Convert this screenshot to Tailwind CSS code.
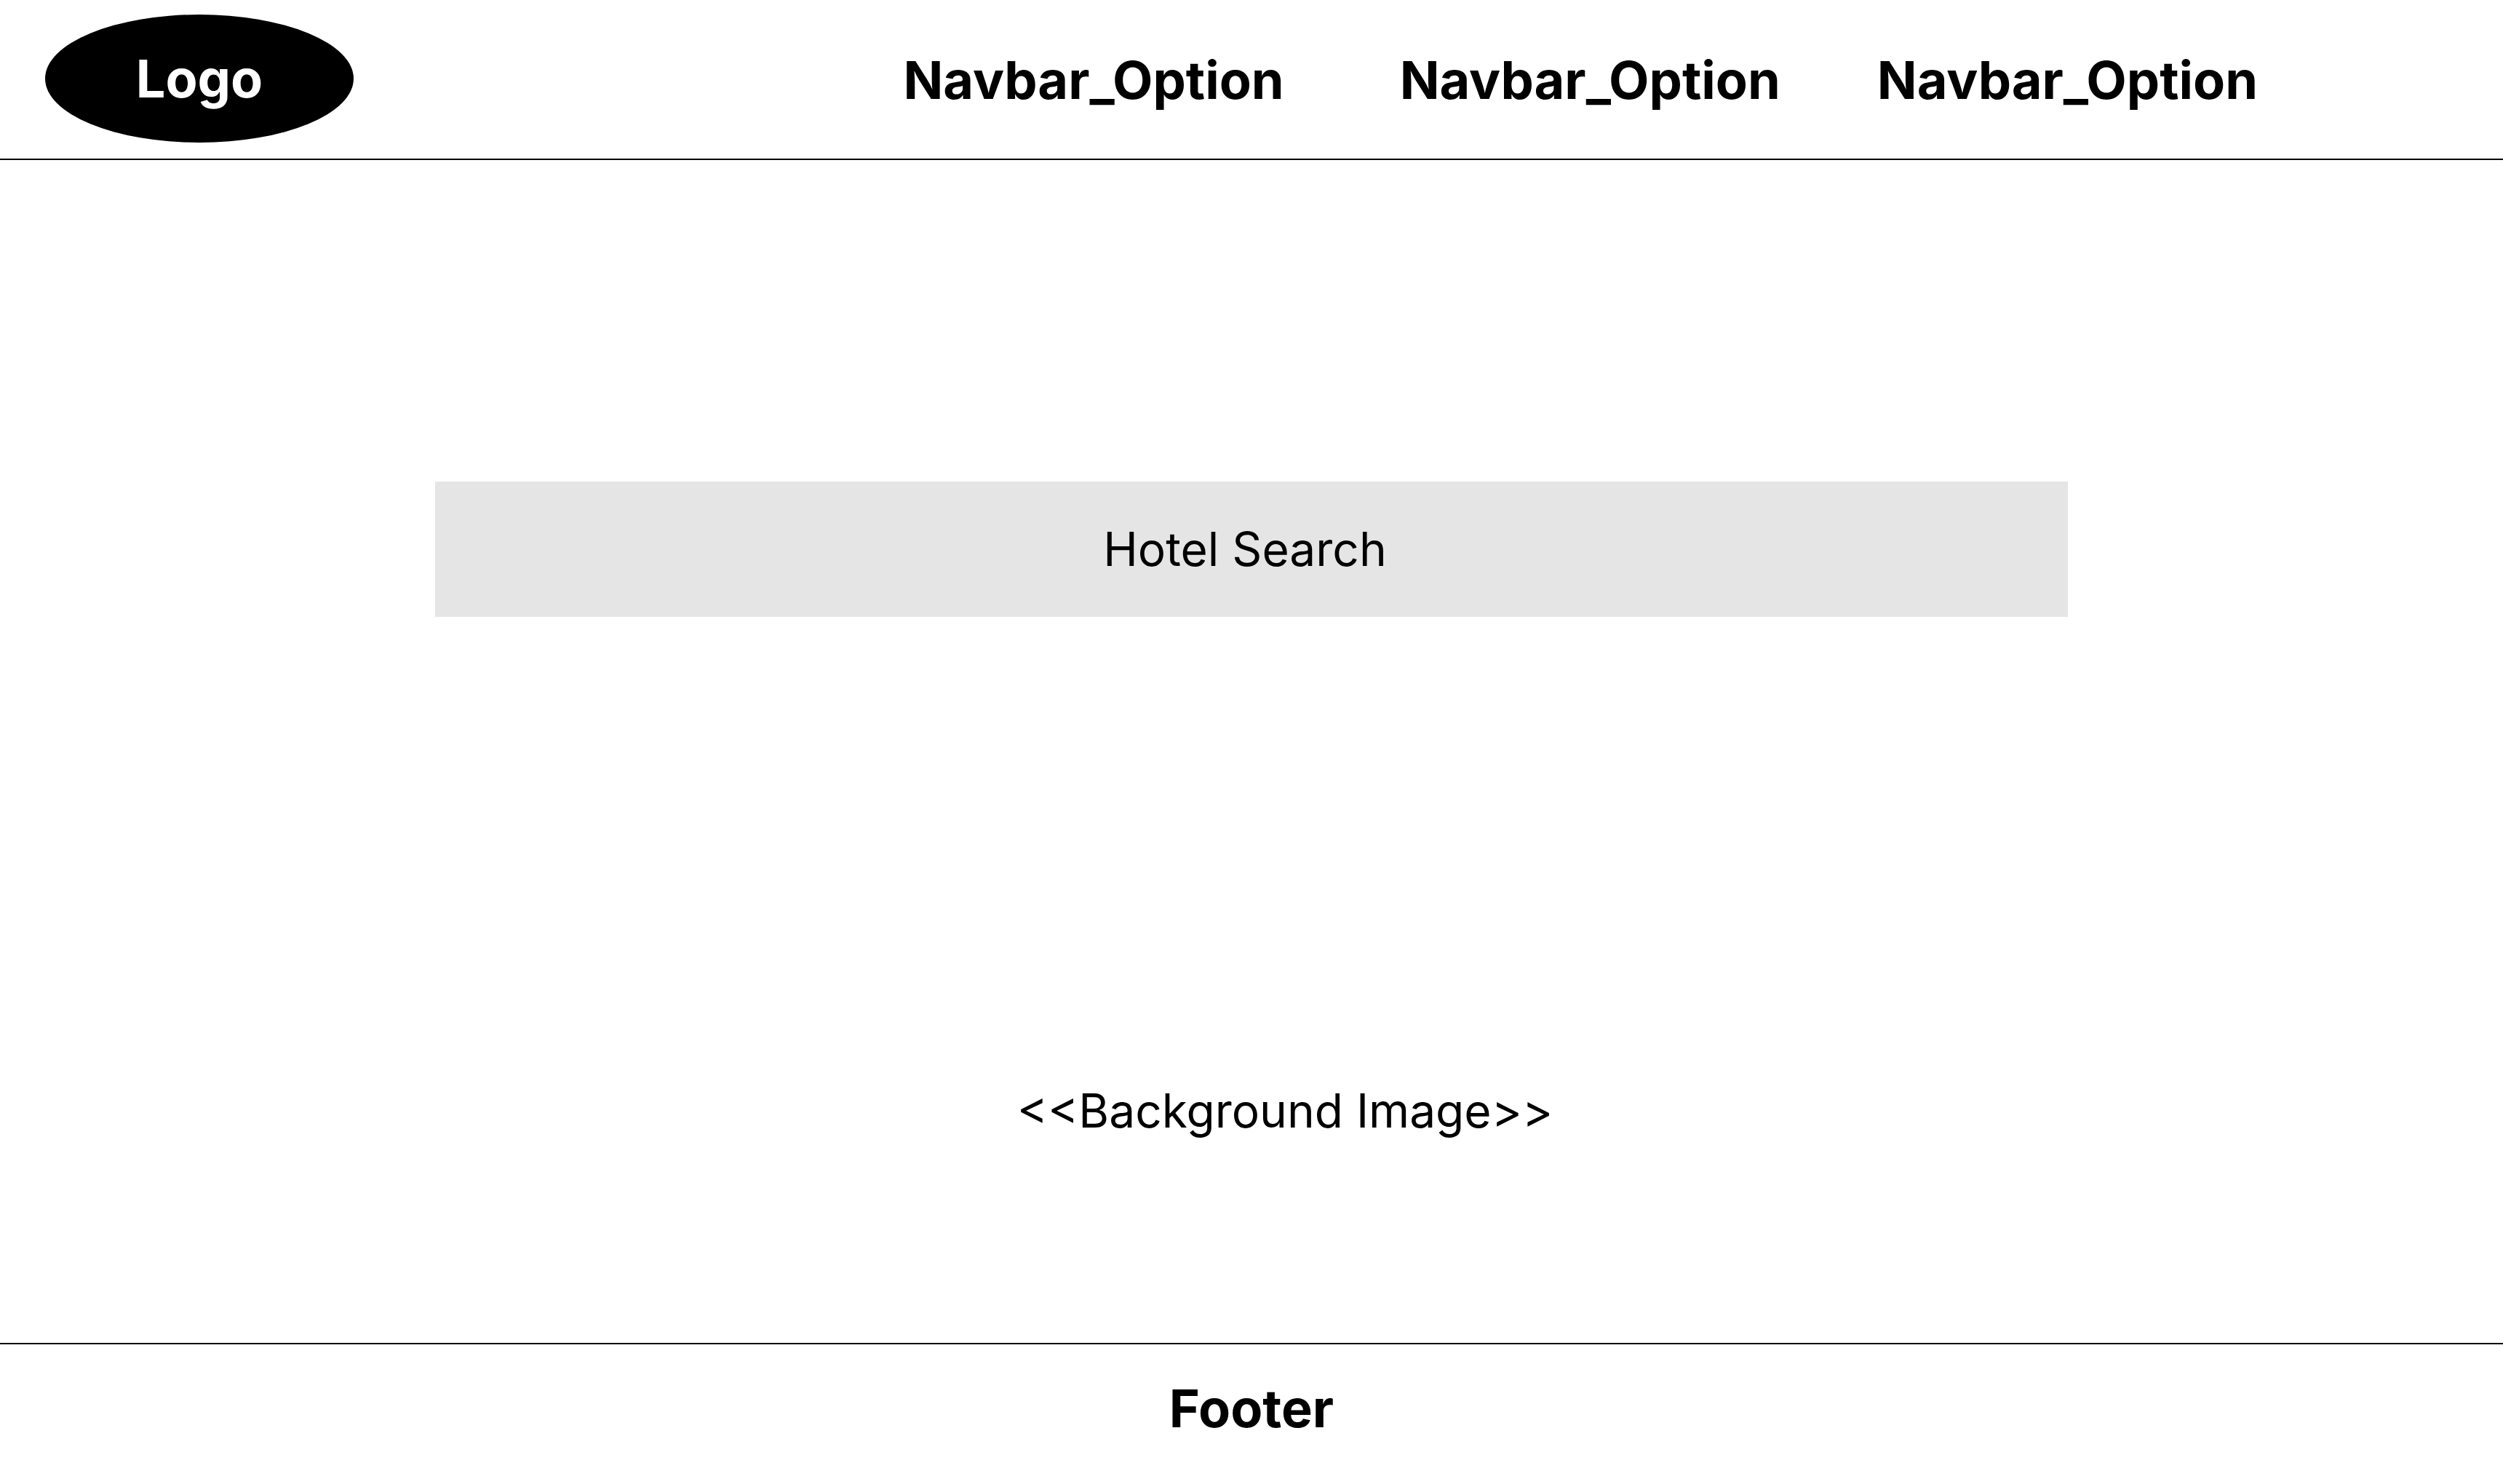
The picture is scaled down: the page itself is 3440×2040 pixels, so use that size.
<!DOCTYPE html>
<html lang="en">
<head>
<meta charset="utf-8">
<meta name="viewport" content="width=device-width, initial-scale=1">
<title>Hotel Search</title>
<script src="https://cdn.jsdelivr.net/npm/@tailwindcss/browser@4"></script>
</head>
<body class="flex min-h-screen flex-col bg-white font-['Inter',sans-serif] text-[64px] leading-[80px] text-black">
<header class="flex items-start border-b-2 border-black pt-5 pb-[22px] pl-[62px] text-[72px] leading-[88px] font-bold">
  <a href="#" class="flex h-[176px] w-[424px] shrink-0 items-center justify-center rounded-[50%] bg-black text-white">Logo</a>
  <nav class="ml-auto flex pt-[46px] pr-[337px]">
    <a href="#" class="mr-[159px]">Navbar_Option</a>
    <a href="#" class="mr-[133px]">Navbar_Option</a>
    <a href="#">Navbar_Option</a>
  </nav>
</header>
<main class="flex flex-1 flex-col items-center justify-between pt-[442px] pb-[279px]">
  <input type="text" aria-label="Hotel Search" placeholder="Hotel Search" class="h-[186px] w-full max-w-[2244px] appearance-none bg-[#e5e5e5] pr-[18px] pb-[2px] text-center placeholder:text-black placeholder:opacity-100">
  <p class="pl-[92px]">&lt;&lt;Background Image&gt;&gt;</p>
</main>
<footer class="border-t-2 border-black pt-[44px] pb-[60px] text-center text-[72px] leading-[88px] font-bold">Footer</footer>
</body>
</html>
